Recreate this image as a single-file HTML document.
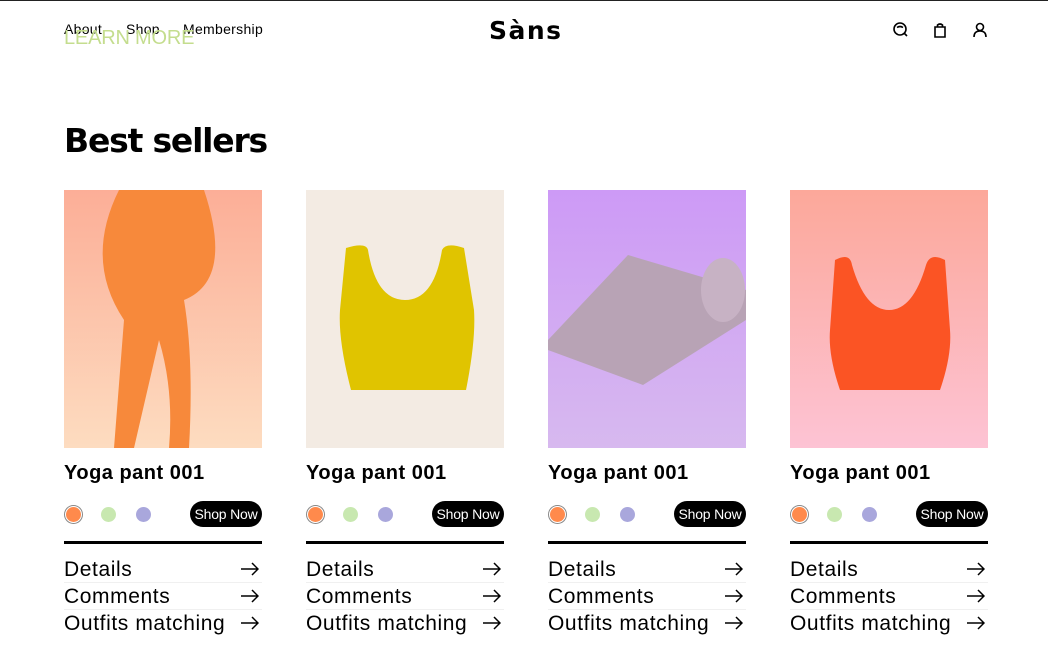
<!DOCTYPE html>
<html><head><meta charset="utf-8"><style>
*{margin:0;padding:0;box-sizing:border-box}
body{width:1048px;height:656px;background:#fff;font-family:"Liberation Sans",sans-serif;color:#000;position:relative;overflow:hidden;border-top:1px solid #222}
.nav{position:absolute;top:20px;left:64px;font-size:14px;letter-spacing:.3px}
.nav span{position:absolute;white-space:nowrap}
.lm{position:absolute;left:64px;top:26px;font-size:20px;color:#c4dd8e;letter-spacing:-.2px}
.logo{position:absolute;left:489px;top:15px;font-size:25px;font-weight:900;font-family:"DejaVu Sans","Liberation Sans",sans-serif;letter-spacing:1.5px}
h1{position:absolute;left:64px;top:120px;font-size:33px;font-weight:900;font-family:"DejaVu Sans",sans-serif;letter-spacing:-1.2px}
.card{position:absolute;top:189px;width:198px}
.img{height:258px;position:relative;overflow:hidden}
.t{position:absolute;top:272px;font-size:20px;font-weight:bold;white-space:nowrap;letter-spacing:.5px}
.dot{position:absolute;top:317px;width:15px;height:15px;border-radius:50%}
.btn{position:absolute;top:311px;right:0;width:72px;height:26px;background:#000;color:#fff;border-radius:13px;font-size:14px;text-align:center;line-height:26px;letter-spacing:-.2px}
.hr{position:absolute;top:351px;left:0;width:198px;height:3px;background:#000}
.row{position:absolute;left:0;width:198px;height:27px;font-size:21px;line-height:27px;border-bottom:1px solid #f0f0f0;letter-spacing:.6px;white-space:nowrap}
.row svg{position:absolute;right:3px;top:6px}
</style></head><body>
<div class="nav"><span style="left:0">About</span><span style="left:62px">Shop</span><span style="left:119px">Membership</span></div>
<div class="lm">LEARN MORE</div>
<div class="logo">Sàns</div>
<svg style="position:absolute;left:892px;top:21px" width="96" height="16" fill="none" stroke="#000" stroke-width="1.6">
<circle cx="8" cy="7" r="6"/><path d="M12 11l3 3M5 5.5q3-2 6 0"/>
<path d="M43 5h10v10h-10zM45.5 5v-2q2.5-2 5 0v2"/>
<circle cx="88" cy="5" r="3.5"/><path d="M82 15q0-6 6-6t6 6"/>
</svg>
<h1>Best sellers</h1>

<div class="card" style="left:64px"><div class="img" style="background:linear-gradient(#fcae97,#fddcc0)">
<svg width="198" height="258"><path d="M55 0 Q20 70 60 130 L50 258 L70 258 L95 150 Q110 200 105 258 L125 258 Q130 170 120 110 Q170 90 140 0Z" fill="#f7893b"/></svg></div></div>
<div class="card" style="left:306px"><div class="img" style="background:#f3ebe3">
<svg width="198" height="258"><path d="M40 58 Q60 52 62 60 Q70 110 99 110 Q128 110 136 60 Q140 52 158 58 L168 120 Q170 150 160 200 L45 200 Q32 150 34 120Z" fill="#e0c400"/></svg></div></div>
<div class="card" style="left:548px"><div class="img" style="background:linear-gradient(#cd9af6,#d7b9ef)">
<svg width="198" height="258"><path d="M0 150 L80 65 L198 100 L198 130 L95 195 L0 160Z" fill="#b8a3b5"/><ellipse cx="175" cy="100" rx="22" ry="32" fill="#c7b2c4"/></svg></div></div>
<div class="card" style="left:790px"><div class="img" style="background:linear-gradient(#fca89a,#fdc3d4)">
<svg width="198" height="258"><path d="M45 70 Q60 62 62 75 Q75 120 99 120 Q123 120 136 75 Q140 62 155 70 L160 140 Q162 165 150 200 L50 200 Q38 165 40 140Z" fill="#fb5424"/></svg></div></div>

<script>
const ar='<svg width="18" height="14" fill="none" stroke="#000" stroke-width="1.5"><path d="M0 7h17M11 1l6 6-6 6"/></svg>';
[64,306,548,790].forEach(x=>{
document.write(`<div class="card" style="left:${x}px;height:460px">
<div class="t">Yoga pant 001</div>
<div class="dot" style="left:2px;background:#ff8a4c;box-shadow:0 0 0 1px #fff,0 0 0 2px #888"></div>
<div class="dot" style="left:37px;background:#c8e8b0"></div>
<div class="dot" style="left:72px;background:#a9a7dc"></div>
<div class="btn">Shop Now</div>
<div class="hr"></div>
<div class="row" style="top:366px">Details${ar}</div>
<div class="row" style="top:393px">Comments${ar}</div>
<div class="row" style="top:420px;border:0">Outfits matching${ar}</div></div>`)});
</script>
</body></html>
